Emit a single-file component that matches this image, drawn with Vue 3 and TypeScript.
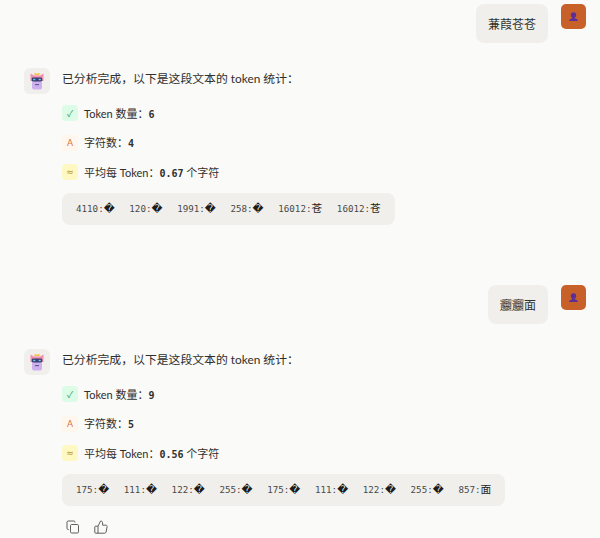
<template>
  <main class="chat">
    <section v-for="(turn, i) in turns" :key="i" class="turn">
      <div class="msg-user">
        <div class="bubble">{{ turn.question }}</div>
        <div class="avatar-user">
          <svg viewBox="0 0 25 25" width="25" height="25" aria-hidden="true">
            <circle cx="12.5" cy="11" r="2.7" fill="#5b2f97" />
            <path d="M11.2 13h2.6v1.2c1.5.5 2.9.9 3.2 2.8H8c.3-1.9 1.7-2.3 3.2-2.8z" fill="#5b2f97" />
          </svg>
        </div>
      </div>

      <div class="msg-bot">
        <div class="avatar-bot">
          <svg viewBox="0 0 16 18" width="16" height="18" aria-hidden="true">
            <path d="M5.5 .8l2.5 1 2.5-1v2.4h-5z" fill="#f5c04a" />
            <path d="M1.5 1.5L5 3.5h6l3.5-2V9h-13z" fill="#f28fb0" />
            <rect x="3" y="9" width="10" height="8.5" rx="2" fill="#cfb0ee" />
            <rect x="2.8" y="5.5" width="10.4" height="4" rx="1.2" fill="#3a3f72" />
            <rect x="4.2" y="6.8" width="2.2" height="1.4" fill="#6fc8ea" />
            <rect x="9.6" y="6.8" width="2.2" height="1.4" fill="#6fc8ea" />
            <rect x="6" y="12" width="4" height="1.2" fill="#6a5a98" />
          </svg>
        </div>
        <div class="body">
          <p class="intro">已分析完成，以下是这段文本的 token 统计：</p>
          <ul class="stats">
            <li>
              <span class="badge badge--green">✓</span>
              <span class="stat">Token 数量：<b>{{ turn.tokens }}</b></span>
            </li>
            <li>
              <span class="badge badge--orange">A</span>
              <span class="stat">字符数：<b>{{ turn.chars }}</b></span>
            </li>
            <li>
              <span class="badge badge--yellow">≈</span>
              <span class="stat">平均每 Token：<b>{{ turn.avg }}</b> 个字符</span>
            </li>
          </ul>
          <div class="tokens">
            <span v-for="(t, j) in turn.list" :key="j" class="tok">{{ t[0] }}:<span class="ch">{{ t[1] }}</span></span>
          </div>
          <div v-if="turn.actions" class="actions">
            <svg viewBox="0 0 14 14" width="14" height="14" fill="none" stroke="#5f5f5c" stroke-width="1" aria-hidden="true">
              <rect x="4.5" y="4.5" width="8" height="8.5" rx="1.2" />
              <path d="M2.8 9.5H2.2A1.2 1.2 0 0 1 1 8.3V2.2A1.2 1.2 0 0 1 2.2 1h5.6A1.2 1.2 0 0 1 9 2.2v.3" />
            </svg>
            <svg viewBox="0 0 14 14" width="14" height="14" fill="none" stroke="#5f5f5c" stroke-width="1" stroke-linejoin="round" aria-hidden="true">
              <path d="M4 6.2v7H1.5a.7.7 0 0 1-.7-.7V6.9c0-.4.3-.7.7-.7z" />
              <path d="M4 6.2L6.6 1c1.2 0 2 .8 2 1.9v2.3h3.3c.8 0 1.4.7 1.2 1.5l-1 5.3c-.1.7-.7 1.2-1.4 1.2H4" />
            </svg>
          </div>
        </div>
      </div>
    </section>
  </main>
</template>

<script setup lang="ts">
type Token = [number, string]

interface Turn {
  question: string
  tokens: number
  chars: number
  avg: string
  list: Token[]
  actions?: boolean
}

const bad = '\uFFFD'

const turns: Turn[] = [
  {
    question: '蒹葭苍苍',
    tokens: 6,
    chars: 4,
    avg: '0.67',
    list: [
      [4110, bad],
      [120, bad],
      [1991, bad],
      [258, bad],
      [16012, '苍'],
      [16012, '苍'],
    ],
  },
  {
    question: '𰻝𰻝面',
    tokens: 9,
    chars: 5,
    avg: '0.56',
    list: [
      [175, bad],
      [111, bad],
      [122, bad],
      [255, bad],
      [175, bad],
      [111, bad],
      [122, bad],
      [255, bad],
      [857, '面'],
    ],
    actions: true,
  },
]
</script>

<style>
html,
body {
  margin: 0;
  background: #fafaf8;
}
</style>

<style scoped>
.chat {
  width: 600px;
  height: 538px;
  overflow: hidden;
  box-sizing: border-box;
  padding-top: 4px;
  background: #fafaf8;
  color: #2f2f2d;
  font-family: Lato, "Noto Sans CJK SC", sans-serif;
  font-size: 11.85px;
}

.turn + .turn {
  margin-top: 60px;
}

.msg-user {
  display: flex;
  justify-content: flex-end;
  align-items: flex-start;
  gap: 13px;
  padding-right: 14px;
}

.bubble {
  display: flex;
  align-items: center;
  height: 39px;
  padding: 0 12px;
  border-radius: 8px;
  background: #f0efec;
  font-size: 12px;
}

.avatar-user {
  width: 25px;
  height: 25px;
  border-radius: 5px;
  background: #c8602a;
}

.msg-bot {
  display: flex;
  gap: 12px;
  margin-top: 25px;
  padding-left: 24px;
}

.avatar-bot {
  display: flex;
  align-items: center;
  justify-content: center;
  flex-shrink: 0;
  width: 26px;
  height: 26px;
  border-radius: 6px;
  background: #f0efec;
}

.intro {
  margin: 0;
  line-height: 22px;
}

.stats {
  display: flex;
  flex-direction: column;
  gap: 13.5px;
  margin: 15px 0 0;
  padding: 0;
  list-style: none;
  font-size: 11px;
}

.stats li {
  display: flex;
  align-items: center;
  gap: 6px;
  height: 16px;
}

.stat {
  margin-top: -1px;
}

.stats b {
  font-family: "DejaVu Sans Mono", monospace;
  font-size: 10px;
}

.badge {
  display: flex;
  align-items: center;
  justify-content: center;
  width: 16px;
  height: 16px;
  border-radius: 4px;
  font-size: 9px;
}

.badge--green {
  background: #dcfce7;
  color: #3f9f67;
}

.badge--orange {
  background: #fff7ed;
  color: #d9743f;
}

.badge--yellow {
  background: #fef9c3;
  color: #b8912c;
  font-family: "DejaVu Sans", sans-serif;
}

.tokens {
  display: flex;
  gap: 14.7px;
  width: fit-content;
  height: 32px;
  align-items: center;
  margin-top: 13px;
  padding: 0 14px;
  border-radius: 8px;
  background: #f0efec;
  color: #4a4a47;
  font-family: "DejaVu Sans Mono", "Noto Sans CJK SC", monospace;
  font-size: 9.2px;
}

.tok {
  display: flex;
  align-items: center;
  line-height: 14px;
  white-space: nowrap;
}

.ch {
  font-family: "DejaVu Sans", "Noto Sans CJK SC", sans-serif;
  font-size: 10.7px;
  color: #1c1c1a;
}

.actions {
  display: flex;
  gap: 14px;
  margin-top: 14px;
  padding-left: 4px;
}
</style>
